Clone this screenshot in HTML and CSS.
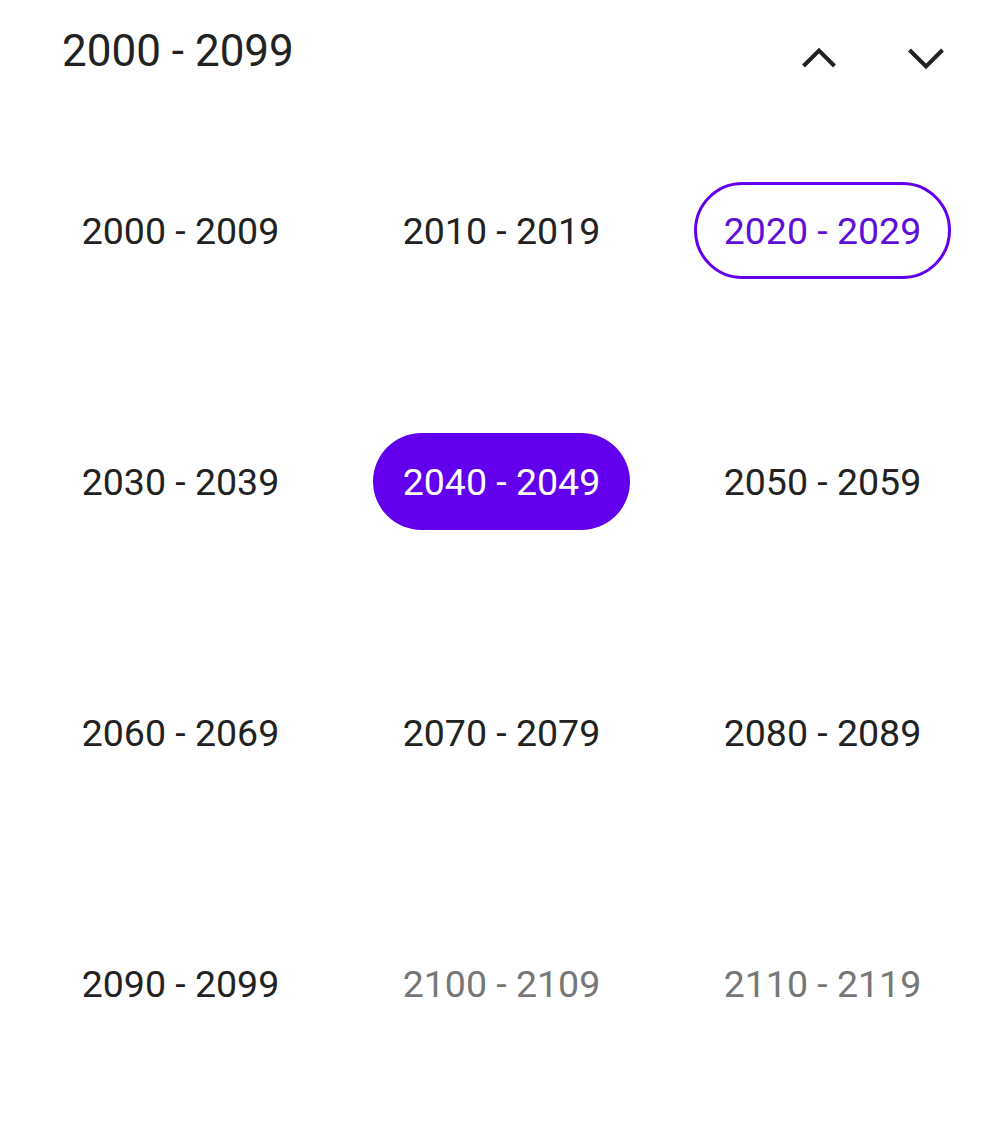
FILE: index.html
```html
<!DOCTYPE html>
<html>
<head>
<meta charset="utf-8">
<link rel="stylesheet" href="styles.css">
</head>
<body>
<div class="picker">
  <div class="header">
    <div class="title">2000 - 2099</div>
    <div class="nav">
      <div class="nav-btn">
        <svg width="40" height="30" viewBox="0 0 40 30"><path d="M4.5 23 L20 7.5 L35.5 23" fill="none" stroke="#222" stroke-width="4"/></svg>
      </div>
      <div class="nav-btn">
        <svg width="40" height="30" viewBox="0 0 40 30"><path d="M3.5 7 L20 23.5 L36.5 7" fill="none" stroke="#222" stroke-width="4"/></svg>
      </div>
    </div>
  </div>
  <div class="grid">
    <div class="cell"><span class="pill">2000 - 2009</span></div>
    <div class="cell"><span class="pill">2010 - 2019</span></div>
    <div class="cell"><span class="pill outlined">2020 - 2029</span></div>
    <div class="cell"><span class="pill">2030 - 2039</span></div>
    <div class="cell"><span class="pill selected">2040 - 2049</span></div>
    <div class="cell"><span class="pill">2050 - 2059</span></div>
    <div class="cell"><span class="pill">2060 - 2069</span></div>
    <div class="cell"><span class="pill">2070 - 2079</span></div>
    <div class="cell"><span class="pill">2080 - 2089</span></div>
    <div class="cell"><span class="pill">2090 - 2099</span></div>
    <div class="cell"><span class="pill muted">2100 - 2109</span></div>
    <div class="cell"><span class="pill muted">2110 - 2119</span></div>
  </div>
</div>
</body>
</html>
```

FILE: styles.css
```css
html, body {
  margin: 0;
  padding: 0;
  background: #fff;
}
body {
  font-family: Roboto, "Noto Sans", sans-serif;
  color: #222;
}
.picker {
  width: 997px;
  height: 1141px;
}
.header {
  display: flex;
  align-items: center;
  justify-content: space-between;
  height: 105px;
  padding: 0 18px 0 62px;
  box-sizing: border-box;
}
.title {
  font-size: 44px;
  line-height: 1;
  margin-top: -4px;
}
.nav {
  display: flex;
}
.nav-btn {
  width: 107px;
  height: 60px;
  display: flex;
  align-items: center;
  justify-content: center;
  margin-top: 10px;
}
.grid {
  display: grid;
  grid-template-columns: repeat(3, 321px);
  grid-auto-rows: 251px;
  padding-left: 20px;
}
.cell {
  display: flex;
  align-items: center;
  justify-content: center;
}
.pill {
  display: flex;
  align-items: center;
  justify-content: center;
  width: 257px;
  height: 97px;
  border-radius: 49px;
  font-size: 37.5px;
  box-sizing: border-box;
}
.outlined {
  border: 3px solid #6200ee;
  color: #5e0fd8;
}
.selected {
  background: #6200ee;
  color: #fff;
}
.muted {
  color: #777;
}
```
